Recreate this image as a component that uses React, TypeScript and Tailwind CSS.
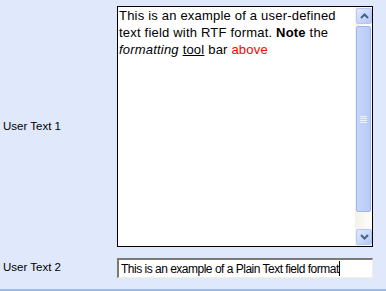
import React from "react";

function Chevron({ up }: { up?: boolean }) {
  return (
    <svg width="9" height="6" viewBox="0 0 9 6">
      <path
        d={up ? "M1 5 L4.5 1.5 L8 5" : "M1 1 L4.5 4.5 L8 1"}
        fill="none"
        stroke="#4d6185"
        strokeWidth="2"
      />
    </svg>
  );
}

function ScrollButton({ up }: { up?: boolean }) {
  return (
    <div className="h-[16px] w-[16px] flex items-center justify-center rounded-[2px] border border-[#b4c8f5] bg-gradient-to-br from-[#e0e9fd] to-[#b4c9f7]">
      <Chevron up={up} />
    </div>
  );
}

function Scrollbar() {
  return (
    <div className="w-[17px] h-full flex flex-col bg-gradient-to-r from-[#f3f1ea] to-[#fefefb] px-[1px] py-[1px]">
      <ScrollButton up />
      <div className="flex-1 flex flex-col pt-[2px] pb-[17px]">
        <div className="flex-1 rounded-[2px] border border-[#9fb6ee] bg-gradient-to-r from-[#c6d6fc] to-[#b6cbfa] flex flex-col items-center justify-center gap-[1px]">
          <div className="w-[7px] h-[1px] bg-[#eef3fe]" />
          <div className="w-[7px] h-[1px] bg-[#eef3fe]" />
          <div className="w-[7px] h-[1px] bg-[#eef3fe]" />
          <div className="w-[7px] h-[1px] bg-[#eef3fe]" />
        </div>
      </div>
      <ScrollButton />
    </div>
  );
}

export default function App() {
  return (
    <div className="w-[386px] h-[291px] bg-[#dfe9fb] flex flex-col border-b-2 border-[#9dbbe8] font-['Liberation_Sans',Arial,sans-serif] text-black">
      {/* RTF field */}
      <div className="flex items-center mt-[6px]">
        <div className="w-[117px] pl-[3px] text-[11.5px]">User Text 1</div>
        <div className="w-[256px] h-[241px] border border-black bg-white flex">
          <p className="flex-1 pl-[1px] text-[13px] leading-[17px] tracking-[0.2px]">
            <span>This is an example of a user-defined text field with RTF format. </span>
            <b>Note</b>
            <span> the </span>
            <i>formatting</i> <u>tool</u> <span>bar </span>
            <span className="text-[#ff0000]">above</span>
          </p>
          <Scrollbar />
        </div>
      </div>

      {/* Plain text field */}
      <div className="flex items-center mt-[11px]">
        <div className="w-[117px] pl-[3px] text-[11.5px]">User Text 2</div>
        <div className="w-[256px] h-[20px] bg-white border-t-2 border-l-2 border-t-[#7a7a72] border-l-[#7a7a72] border-b border-r border-b-[#f1efe2] border-r-[#f1efe2] flex items-center pl-[2px]">
          <span className="text-[12px] tracking-[-0.5px] font-['Liberation_Sans_Narrow','Liberation_Sans',sans-serif]">
            This is an example of a Plain Text field format
          </span>
          <span className="w-[1px] h-[15px] bg-black" />
        </div>
      </div>
    </div>
  );
}
